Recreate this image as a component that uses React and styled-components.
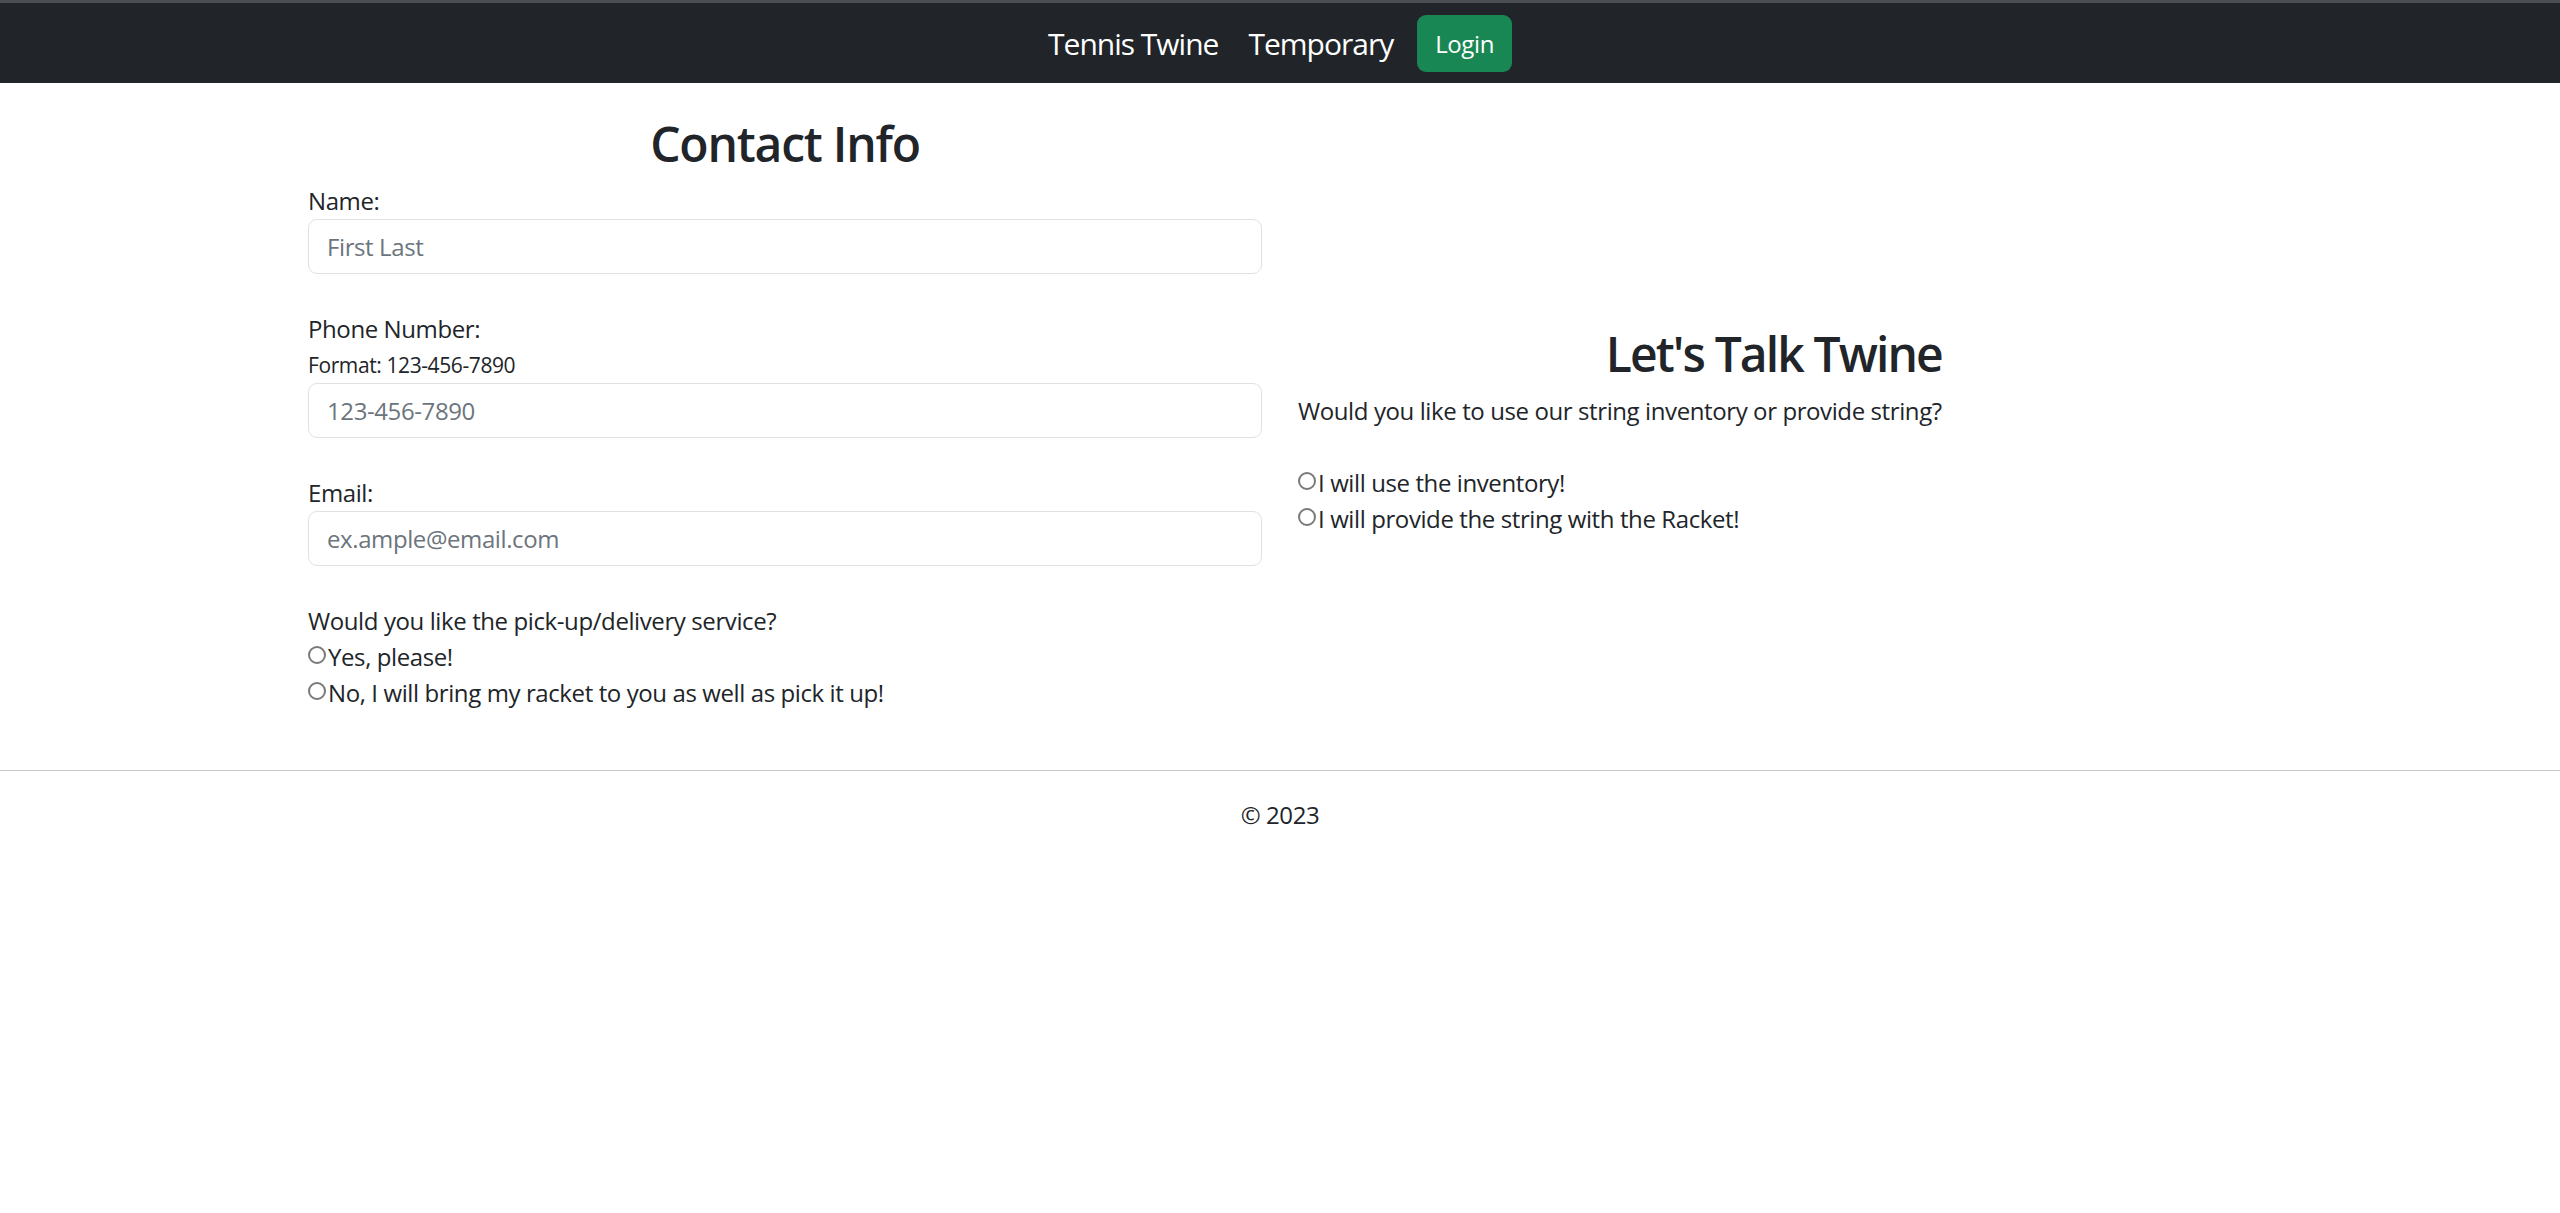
import React from "react";
import styled, { createGlobalStyle } from "styled-components";

const GlobalStyle = createGlobalStyle`
  *, *::before, *::after { box-sizing: border-box; }
  html, body { margin: 0; padding: 0; background: #ffffff; }
  body {
    font-family: "Open Sans", "Noto Sans", "Liberation Sans", sans-serif;
    font-size: 24px;
    line-height: 1.5;
    color: #212529;
    letter-spacing: -0.4px;
  }
`;

const NavBar = styled.header`
  border-top: 3px solid #4b4e53;
  background: #212529;
  height: 83px;
  display: flex;
  justify-content: center;
  align-items: center;
`;

const NavLink = styled.a`
  color: #ffffff;
  font-size: 30px;
  text-decoration: none;
  margin-right: ${(p) => p.$gap || 24}px;
  line-height: 1.5;
  letter-spacing: -1px;
`;

const LoginButton = styled.button`
  background: #198754;
  color: #ffffff;
  border: none;
  border-radius: 9px;
  height: 57px;
  padding: 0 18px;
  font-family: inherit;
  font-size: 24px;
  letter-spacing: -0.4px;
  cursor: pointer;
`;

const Container = styled.main`
  max-width: 1980px;
  margin: 0 auto;
  padding: 32px 0 59px;
  display: grid;
  grid-template-columns: 1fr 1fr;
  align-items: start;
`;

const Column = styled.section`
  padding: ${(p) => p.$top || 0}px 18px 0;
`;

const Panel = styled.div`
  width: fit-content;
`;

const Heading = styled.h2`
  margin: 0 0 10px;
  font-size: 48px;
  font-weight: 600;
  line-height: 1.2;
  letter-spacing: ${(p) => p.$tight ? -1.9 : -1.2}px;
  text-align: ${(p) => p.$align || "center"};
`;

const Field = styled.div`
  margin-bottom: ${(p) => (p.$last ? 0 : 37)}px;
`;

const Label = styled.label`
  display: block;
  line-height: 36px;
`;

const Hint = styled.div`
  font-size: 21px;
  line-height: 36px;
`;

const TextInput = styled.input`
  display: block;
  width: 100%;
  height: 55px;
  padding: 0 18px;
  border: 1.5px solid #dee2e6;
  border-radius: 9px;
  font-family: inherit;
  font-size: 24px;
  letter-spacing: -0.4px;
  color: #212529;
  background: #ffffff;
  outline: none;
  &::placeholder { color: #6c757d; }
`;

const Question = styled.p`
  margin: 0;
  line-height: 36px;
`;

const Spacer = styled.div`
  height: 36px;
`;

const RadioRow = styled.label`
  display: flex;
  align-items: center;
  height: 36px;
`;

const Radio = styled.input.attrs({ type: "radio" })`
  appearance: none;
  -webkit-appearance: none;
  width: 18px;
  height: 18px;
  margin: -3px 2px 0 0;
  border: 2px solid #7a7a7a;
  border-radius: 50%;
  background: #ffffff;
  flex: none;
`;

const Footer = styled.footer`
  border-top: 1px solid #c8c8c8;
  padding-top: 26px;
  text-align: center;
  line-height: 36px;
  color: #212529;
`;

export default function App() {
  return (
    <>
      <GlobalStyle />
      <NavBar>
        <NavLink href="#" $gap={30}>Tennis Twine</NavLink>
        <NavLink href="#" $gap={24}>Temporary</NavLink>
        <LoginButton type="button">Login</LoginButton>
      </NavBar>
      <Container>
        <Column>
          <Heading>Contact Info</Heading>
          <Field>
            <Label htmlFor="name">Name:</Label>
            <TextInput id="name" placeholder="First Last" />
          </Field>
          <Field>
            <Label htmlFor="phone">Phone Number:</Label>
            <Hint>Format: 123-456-7890</Hint>
            <TextInput id="phone" placeholder="123-456-7890" />
          </Field>
          <Field>
            <Label htmlFor="email">Email:</Label>
            <TextInput id="email" placeholder="ex.ample@email.com" />
          </Field>
          <Field $last>
            <Question>Would you like the pick-up/delivery service?</Question>
            <RadioRow>
              <Radio name="delivery" />
              Yes, please!
            </RadioRow>
            <RadioRow>
              <Radio name="delivery" />
              No, I will bring my racket to you as well as pick it up!
            </RadioRow>
          </Field>
        </Column>
        <Column $top={210}>
          <Panel>
            <Heading $align="right" $tight>Let's Talk Twine</Heading>
            <Question>Would you like to use our string inventory or provide string?</Question>
            <Spacer />
            <RadioRow>
              <Radio name="string" />
              I will use the inventory!
            </RadioRow>
            <RadioRow>
              <Radio name="string" />
              I will provide the string with the Racket!
            </RadioRow>
          </Panel>
        </Column>
      </Container>
      <Footer>© 2023</Footer>
    </>
  );
}
